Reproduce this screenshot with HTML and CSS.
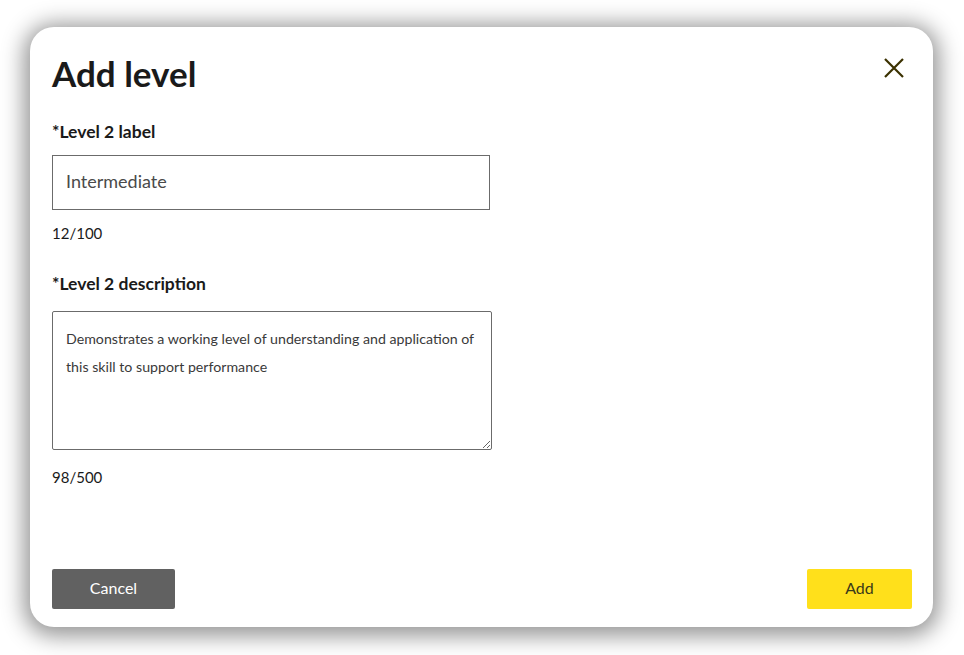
FILE: index.html
```html
<!DOCTYPE html>
<html lang="en">
<head>
<meta charset="utf-8">
<title>Add level</title>
<link rel="stylesheet" href="styles.css">
</head>
<body>
<div class="backdrop">
  <div class="modal">
    <div class="modal-header">
      <h1 class="title">Add level</h1>
      <button class="close" aria-label="Close">
        <svg width="20" height="20" viewBox="0 0 20 20"><path d="M1 1 L19 19 M19 1 L1 19" stroke="#3b3100" stroke-width="2.2" fill="none"/></svg>
      </button>
    </div>
    <div class="modal-body">
      <label class="field-label">*Level 2 label</label>
      <input class="text-input" type="text" value="Intermediate">
      <div class="counter">12/100</div>
      <label class="field-label second">*Level 2 description</label>
      <textarea class="text-area">Demonstrates a working level of understanding and application of this skill to support performance</textarea>
      <div class="counter last">98/500</div>
    </div>
    <div class="modal-footer">
      <button class="btn btn-cancel">Cancel</button>
      <button class="btn btn-add">Add</button>
    </div>
  </div>
</div>
</body>
</html>
```
FILE: styles.css
```css
html, body {
  margin: 0;
  padding: 0;
  background: #ffffff;
  font-family: Lato, "Noto Sans", sans-serif;
}
.backdrop {
  padding: 27px 31px 28px 30px;
  width: 964px;
  height: 655px;
  box-sizing: border-box;
}
.modal {
  width: 903px;
  height: 600px;
  box-sizing: border-box;
  background: #fff;
  border-radius: 24px;
  box-shadow: 0 3px 22px 6px rgba(0, 0, 0, 0.42);
  padding: 0 21px 18px 22px;
  display: flex;
  flex-direction: column;
}
.modal-header {
  display: flex;
  justify-content: space-between;
  align-items: flex-start;
}
.title {
  margin: 26px 0 0 0;
  font-size: 35px;
  line-height: 40px;
  font-weight: 700;
  color: #1a1a1a;
}
.close {
  margin: 31px 8px 0 0;
  padding: 0;
  border: none;
  background: none;
  width: 20px;
  height: 20px;
  display: flex;
}
.modal-body {
  flex: 1;
  display: flex;
  flex-direction: column;
  align-items: flex-start;
}
.field-label {
  margin-top: 28px;
  font-size: 17.5px;
  line-height: 22px;
  font-weight: 700;
  color: #1a1a1a;
}
.field-label.second {
  margin-top: 30px;
}
.text-input {
  margin-top: 12px;
  width: 438px;
  height: 55px;
  box-sizing: border-box;
  border: 1px solid #6b6b6b;
  border-radius: 0;
  padding: 0 13px 3px 13px;
  font-family: Lato, "Noto Sans", sans-serif;
  font-size: 18px;
  color: #4a4a4a;
  outline: none;
}
.counter {
  margin-top: 14px;
  font-size: 15px;
  line-height: 19px;
  color: #1a1a1a;
}
.text-area {
  margin-top: 16px;
  width: 440px;
  height: 139px;
  box-sizing: border-box;
  border: 1px solid #6b6b6b;
  border-radius: 2px;
  padding: 13px 13px;
  font-family: Lato, "Noto Sans", sans-serif;
  font-size: 14.2px;
  line-height: 28px;
  color: #3a3a3a;
  resize: vertical;
  outline: none;
}
.counter.last {
  margin-top: 18px;
}
.modal-footer {
  display: flex;
  justify-content: space-between;
}
.btn {
  height: 40px;
  border: none;
  border-radius: 2px;
  font-family: Lato, "Noto Sans", sans-serif;
  font-size: 16px;
  padding: 0 0 3px 0;
}
.btn-cancel {
  width: 123px;
  background: #616161;
  color: #ffffff;
}
.btn-add {
  width: 105px;
  background: #ffe01b;
  color: #3a3a1a;
}
```
